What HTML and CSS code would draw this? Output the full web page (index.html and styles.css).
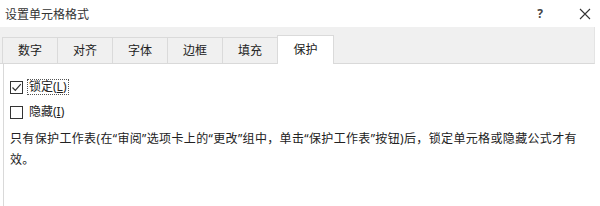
FILE: index.html
```html
<!DOCTYPE html>
<html lang="zh-CN">
<head>
    <meta charset="UTF-8">
    <title>设置单元格格式</title>
    <link rel="stylesheet" href="styles.css">
</head>
<body>
    <div class="dialog">
        <div class="titlebar">
            <span class="title">设置单元格格式</span>
            <span class="help">?</span>
            <svg class="close" width="12" height="12" viewBox="0 0 12 12">
                <path d="M1 1 L11 11 M11 1 L1 11" stroke="#333" stroke-width="1.1" fill="none"/>
            </svg>
        </div>
        <div class="tabstrip">
            <div class="tab">数字</div>
            <div class="tab">对齐</div>
            <div class="tab">字体</div>
            <div class="tab">边框</div>
            <div class="tab">填充</div>
            <div class="tab active">保护</div>
        </div>
        <div class="panel">
            <label class="option">
                <span class="box">
                    <svg width="11" height="11" viewBox="0 0 11 11">
                        <path d="M1.5 5.5 L4.3 8.3 L9.8 2.2" stroke="#333" stroke-width="1.2" fill="none"/>
                    </svg>
                </span>
                <span class="label focused">锁定(<u>L</u>)</span>
            </label>
            <label class="option">
                <span class="box"></span>
                <span class="label">隐藏(<u>I</u>)</span>
            </label>
            <p class="note">只有保护工作表(在“审阅”选项卡上的“更改”组中，单击“保护工作表”按钮)后，锁定单元格或隐藏公式才有效。</p>
        </div>
    </div>
</body>
</html>
```

FILE: styles.css
```css
* {
    margin: 0;
    padding: 0;
    box-sizing: border-box;
}
body {
    width: 600px;
    height: 206px;
    background: #fff;
    font-family: "Noto Sans", "Noto Sans CJK SC", sans-serif;
    font-size: 12px;
    color: #222;
    overflow: hidden;
}
.titlebar {
    display: flex;
    align-items: center;
    height: 27px;
    padding: 0 9px 0 5px;
}
.title {
    flex: 1;
    color: #333;
}
.help {
    font-weight: bold;
    color: #444;
    margin-right: 36px;
}
.tabstrip {
    display: flex;
    align-items: flex-end;
    height: 37px;
    width: 595px;
    background: #f0f0f0;
    border-right: 1px solid #e4e4e4;
    border-bottom: 1px solid #d9d9d9;
    padding-left: 2px;
}
.tab {
    width: 55px;
    height: 26px;
    line-height: 25px;
    text-align: center;
    border: 1px solid #dadada;
    border-bottom: none;
    border-right: none;
    color: #222;
}
.tab.active {
    width: 57px;
    height: 29px;
    line-height: 28px;
    margin-bottom: -1px;
    background: #fff;
    border-right: 1px solid #dadada;
}
.panel {
    width: 595px;
    height: 142px;
    margin-left: 3px;
    border-left: 1px solid #d9d9d9;
    padding: 14px 0 0 6px;
}
.option {
    display: flex;
    align-items: center;
    height: 18px;
    margin-bottom: 7px;
}
.box {
    display: flex;
    align-items: center;
    justify-content: center;
    width: 13px;
    height: 13px;
    border: 1px solid #333;
    background: #fff;
    margin-right: 4px;
}
.label {
    padding: 0 1px;
    border: 1px dotted transparent;
    line-height: 14px;
}
.label.focused {
    border-color: #555;
}
.note {
    width: 572px;
    line-height: 21px;
    letter-spacing: 0.35px;
    margin-top: 0;
}
```
